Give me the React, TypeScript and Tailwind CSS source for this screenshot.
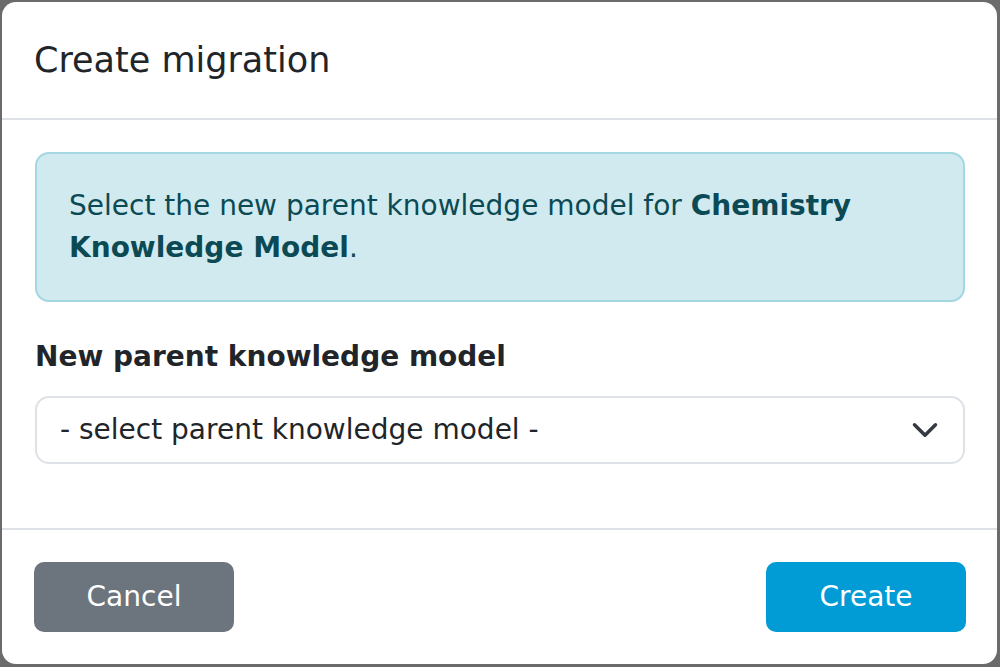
const font = { fontFamily: '"DejaVu Sans", "Noto Sans", sans-serif' };

// ===== CHEVRON =====
const Chevron = () => (
  <svg width="28" height="28" viewBox="0 0 16 16" fill="none">
    <path d="m2 5 6 6 6-6" stroke="#343a40" strokeWidth="2" strokeLinecap="round" strokeLinejoin="round" />
  </svg>
);

export default function App() {
  return (
    <div className="w-[1000px] h-[667px] bg-[#6b6b6b] pt-[2px] pl-[2px] overflow-hidden" style={font}>
      <div className="w-[995px] h-[662px] bg-white rounded-[14px] flex flex-col overflow-hidden">
        {/* Header */}
        <div className="h-[118px] flex items-center pl-[32px] border-b-2 border-[#dee2e6] shrink-0">
          <h5 className="text-[35px] leading-[52px] text-[#212529] font-normal">Create migration</h5>
        </div>

        {/* Body */}
        <div className="flex-1 pl-[33px] pr-[32px] pt-[32px]">
          <div className="h-[150px] bg-[#d1eaef] border-2 border-[#a3d8e2] rounded-[14px] px-[32px] py-[31px] text-[28px] leading-[42px] text-[#0b4a54]">
            Select the new parent knowledge model for <strong className="font-bold">Chemistry Knowledge Model</strong>.
          </div>
          <label className="block mt-[34px] text-[28px] leading-[42px] font-bold text-[#212529]">
            New parent knowledge model
          </label>
          <div className="mt-[18px] h-[68px] border-2 border-[#dee2e6] rounded-[14px] flex items-center justify-between pl-[23px] pr-[24px]">
            <span className="text-[28px] leading-[42px] text-[#212529]">- select parent knowledge model -</span>
            <Chevron />
          </div>
        </div>

        {/* Footer */}
        <div className="h-[136px] border-t-2 border-[#dee2e6] flex items-start justify-between pl-[32px] pr-[31px] pt-[32px] shrink-0">
          <button className="w-[200px] h-[70px] rounded-[10px] bg-[#6c757d] text-white text-[28px] leading-[42px]">
            Cancel
          </button>
          <button className="w-[200px] h-[70px] rounded-[10px] bg-[#019bd6] text-white text-[28px] leading-[42px]">
            Create
          </button>
        </div>
      </div>
    </div>
  );
}
